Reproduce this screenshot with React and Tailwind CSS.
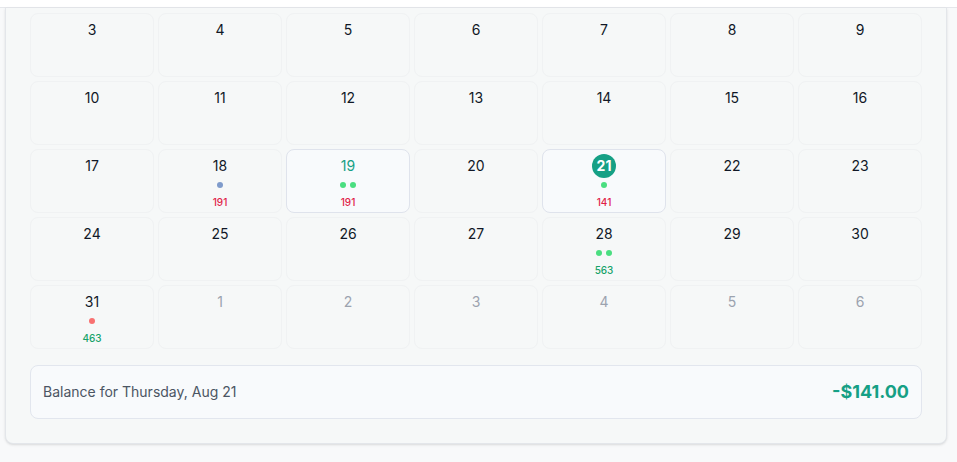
import React from "react";

const days = [
  [3, 4, 5, 6, 7, 8, 9],
  [10, 11, 12, 13, 14, 15, 16],
  [17, 18, 19, 20, 21, 22, 23],
  [24, 25, 26, 27, 28, 29, 30],
  [31, 1, 2, 3, 4, 5, 6],
];

const info = {
  18: { dots: ["bg-[#7f9bcb]"], amount: "191", amountColor: "text-[#e11d48]" },
  19: { dots: ["bg-[#4ade80]", "bg-[#4ade80]"], amount: "191", amountColor: "text-[#e11d48]", selected: true, teal: true },
  21: { dots: ["bg-[#4ade80]"], amount: "141", amountColor: "text-[#e11d48]", selected: true, today: true },
  28: { dots: ["bg-[#4ade80]", "bg-[#4ade80]"], amount: "563", amountColor: "text-[#16a36a]" },
  31: { dots: ["bg-[#f87171]"], amount: "463", amountColor: "text-[#16a36a]" },
};

function Cell({ day, other }) {
  const d = other ? null : info[day];
  return (
    <div
      className={
        "h-16 rounded-lg border flex flex-col items-center pt-[6px] " +
        (d && d.selected ? "border-[#dfe3ec] bg-[#f8fafc]" : "border-[#f0f2f3] bg-[#f6f8f8]")
      }
    >
      <div className="h-5 flex items-center justify-center">
        {d && d.today ? (
          <span className="h-6 w-6 rounded-full bg-[#16a085] text-white text-sm font-bold flex items-center justify-center">
            {day}
          </span>
        ) : (
          <span
            className={
              "text-sm leading-5 " +
              (other ? "text-[#9ca3af]" : d && d.teal ? "text-[#16a085]" : "text-[#111827]")
            }
          >
            {day}
          </span>
        )}
      </div>
      {d && (
        <>
          <div className="mt-[6px] flex gap-1">
            {d.dots.map((c, i) => (
              <span key={i} className={"h-1.5 w-1.5 rounded-full " + c} />
            ))}
          </div>
          <div className={"mt-[7px] text-[10px] leading-[14px] font-medium " + d.amountColor}>{d.amount}</div>
        </>
      )}
    </div>
  );
}

export default function App() {
  return (
    <div
      className="w-full h-[462px] bg-[#f8f9fa] overflow-hidden"
      style={{ fontFamily: "Inter, 'Noto Sans', sans-serif" }}
    >
      <div className="h-[8px] bg-white border-b border-[#e5e7eb]" />
      <div className="ml-[5px] w-[942px] bg-[#f6f8f8] border-x border-b border-[#e3e6ea] rounded-b-lg px-6 pt-[5px] pb-6 shadow-sm">
        <div className="grid grid-cols-7 gap-1">
          {days.map((row, r) =>
            row.map((day, c) => (
              <Cell key={r + "-" + c} day={day} other={r === 4 && c > 0} />
            ))
          )}
        </div>
        <div className="mt-4 h-[54px] rounded-lg border border-[#e2e6ee] bg-[#f8fafc] pl-3 pr-[12px] flex items-center justify-between">
          <span className="text-sm text-[#4b5563]">Balance for Thursday, Aug 21</span>
          <span className="text-lg font-bold text-[#16a085]">-$141.00</span>
        </div>
      </div>
    </div>
  );
}
